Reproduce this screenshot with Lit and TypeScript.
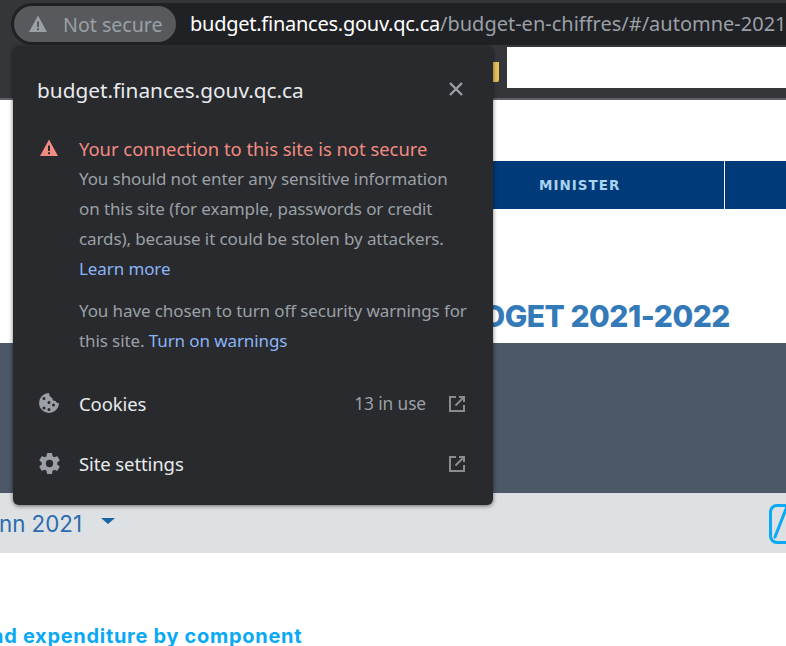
import { LitElement, html, css } from 'lit'
import { customElement } from 'lit/decorators.js'

const warn = html`<svg viewBox="0 0 20 20" width="20" height="20"><path fill="currentColor" fill-rule="evenodd" d="M10 1.500 19 18H1Z M9 7.500v5.500h2V7.500Z M9 14.200v2h2v-2Z"/></svg>`
const external = html`<svg viewBox="0 0 16 16" width="16" height="16" fill="none" stroke="#8b8c90" stroke-width="2"><path d="M7 1H1v14h14V9"/><path d="M10 1h5v5"/><path d="M14.500 1.500 6.500 9.500"/></svg>`

@customElement('app-root')
export class AppRoot extends LitElement {
  static styles = css`
    :host {
      display: block;
      position: relative;
      width: 786px;
      height: 646px;
      overflow: hidden;
      background: #fff;
      font-family: "Noto Sans", "Open Sans", sans-serif;
    }
    .toolbar {
      height: 45px;
      box-sizing: border-box;
      padding: 3px 0 0 11px;
      background: #35363a;
    }
    .omnibox {
      height: 42px;
      box-sizing: border-box;
      padding: 3px 0 0 3px;
      background: #202124;
      border-radius: 21px 0 0 21px;
      display: flex;
      white-space: nowrap;
    }
    .chip {
      width: 162px;
      height: 36px;
      box-sizing: border-box;
      border-radius: 18px;
      background: #58595c;
      color: #9aa0a6;
      display: flex;
      align-items: center;
      gap: 15px;
      padding-left: 14px;
      font-size: 19.6px;
      flex: none;
    }
    .chip svg { flex: none; }
    .url {
      margin-left: 14px;
      font-size: 20px;
      line-height: 36px;
      color: #9aa0a6;
    }
    .url b { font-weight: 400; color: #fff; letter-spacing: -0.25px; }
    .bookmarks {
      height: 53px;
      background: #35363a;
      border-bottom: 2px solid #5f6064;
      display: flex;
      justify-content: flex-end;
    }
    .bookmarks .folder {
      width: 9px;
      height: 20px;
      margin: 17px 8px 0 0;
      border-radius: 0 0 2px 2px;
      background: #e9c45c;
    }
    .bookmarks .blank {
      width: 279px;
      height: 41px;
      margin-top: 2px;
      background: #fff;
    }
    .gap { height: 61px; }
    .nav {
      height: 48px;
      margin-left: 40px;
      background: #003a78;
      display: flex;
      font: 700 13.5px "DejaVu Sans", sans-serif;
      color: #a9d3ee;
    }
    .nav .cell {
      width: 685px;
      flex: none;
      box-sizing: border-box;
      border-right: 1px solid #fff;
      padding-left: 499px;
      display: flex;
      align-items: center;
      letter-spacing: 1px;
    }
    .title {
      height: 134px;
      box-sizing: border-box;
      display: flex;
      justify-content: flex-end;
      align-items: flex-end;
      padding: 0 56px 9px 0;
      font: 800 30px "Inter", sans-serif;
      letter-spacing: -0.5px;
      color: #347ab8;
    }
    .slate { height: 150px; background: #4c5768; }
    .select {
      height: 60px;
      background: #dee1e4;
      display: flex;
      align-items: center;
      justify-content: space-between;
      font: 400 22.3px "Inter", sans-serif;
      color: #2a6cad;
    }
    .select .period { display: flex; align-items: center; gap: 19px; margin: 0 0 0 -1px; }
    .caret {
      width: 0;
      height: 0;
      border: 7px solid transparent;
      border-top: 6px solid #1266a8;
      border-bottom: 0;
      margin-top: -4px;
    }
    .select .mark {
      width: 40px;
      height: 40px;
      box-sizing: border-box;
      border: 3px solid #0aa9f5;
      border-radius: 8px;
      margin-right: -23px;
      margin-top: 2px;
    }
    .select .mark svg { display: block; }
    .heading {
      margin: 71px 0 0 -9px;
      font: 700 20px "Inter", sans-serif;
      letter-spacing: 0.7px;
      color: #0aa9f5;
      white-space: nowrap;
      line-height: 24px;
    }
    .popup {
      position: absolute;
      left: 13px;
      top: 46px;
      width: 480px;
      height: 459px;
      box-sizing: border-box;
      border-radius: 6px;
      background: #292a2d;
      box-shadow: 0 1px 4px rgba(0,0,0,.55);
      padding: 26px 24px 0;
      color: #e8eaed;
    }
    .head {
      display: flex;
      justify-content: space-between;
      align-items: center;
      font-size: 20.800px;
      line-height: 36px;
    }
    .head svg { margin: -3px 5px 0 0; }
    .warning { display: flex; gap: 20px; margin-top: 26px; }
    .warning .icon { color: #f28b82; flex: none; height: 20px; margin: 4px 0 0 2px; }
    .warning h2 {
      margin: 0;
      font-size: 18.400px;
      font-weight: 400;
      line-height: 30px;
      color: #f28b82;
    }
    .warning p {
      margin: 0;
      font-size: 17px;
      line-height: 30px;
      letter-spacing: -0.1px;
      color: #9aa0a6;
    }
    .warning p + p { margin-top: 12px; }
    a { color: #8ab4f8; text-decoration: none; }
    .rows { margin-top: 17px; }
    .row {
      display: flex;
      align-items: center;
      height: 60px;
      font-size: 18.500px;
      letter-spacing: -0.1px;
    }
    .row .lead { width: 42px; flex: none; display: flex; }
    .row .lead .cookie { margin-left: 2px; }
    .row .label { flex: 1; }
    .row .count { color: #9aa0a6; font-size: 17.300px; margin-right: 23px; }
    .row .ext { margin: 1px 4px 0 0; display: flex; }
  `

  render() {
    return html`
      <div class="toolbar">
        <div class="omnibox">
          <div class="chip">${warn}<span>Not secure</span></div>
          <div class="url"><b>budget.finances.gouv.qc.ca</b>/budget-en-chiffres/#/automne-2021</div>
        </div>
      </div>
      <div class="bookmarks"><div class="folder"></div><div class="blank"></div></div>
      <div class="gap"></div>
      <div class="nav"><div class="cell">MINISTER</div></div>
      <div class="title">BUDGET 2021-2022</div>
      <div class="slate"></div>
      <div class="select">
        <div class="period"><span>nn 2021</span><i class="caret"></i></div>
        <div class="mark">
          <svg viewBox="0 0 34 34" width="34" height="34"><path d="M15.500 -2 3 30" stroke="#0aa9f5" stroke-width="3" stroke-linecap="round" fill="none"/></svg>
        </div>
      </div>
      <div class="heading">nd expenditure by component</div>

      <div class="popup">
        <div class="head">
          <span>budget.finances.gouv.qc.ca</span>
          <svg viewBox="0 0 16 16" width="16" height="16" stroke="#9aa0a6" stroke-width="2.400"><path d="M2 2 14 14M14 2 2 14"/></svg>
        </div>
        <div class="warning">
          <div class="icon">${warn}</div>
          <div>
            <h2>Your connection to this site is not secure</h2>
            <p>You should not enter any sensitive information on this site (for example, passwords or credit cards), because it could be stolen by attackers. <a>Learn more</a></p>
            <p>You have chosen to turn off security warnings for this site. <a>Turn on warnings</a></p>
          </div>
        </div>
        <div class="rows">
          <div class="row">
            <span class="lead">
              <svg class="cookie" viewBox="0 0 20 20" width="20" height="20"><path fill-rule="evenodd" fill="#9aa0a6" d="M10 0a10 10 0 1 0 10 10c-1.600.3-3-.5-3.400-2-1.700.3-3.300-1-3.300-3C11.600 4.800 10 2.500 10 0ZM5 4.100a1.500 1.500 0 1 1 0 3 1.500 1.500 0 0 1 0-3ZM10 8a1.500 1.500 0 1 1 0 3 1.500 1.500 0 0 1 0-3ZM14.500 10.500a1.500 1.500 0 1 1 0 3 1.500 1.500 0 0 1 0-3ZM5 13.500a1.500 1.500 0 1 1 0 3 1.500 1.500 0 0 1 0-3ZM10 15a1.500 1.500 0 1 1 0 3 1.500 1.500 0 0 1 0-3Z"/></svg>
            </span>
            <span class="label">Cookies</span>
            <span class="count">13 in use</span>
            <span class="ext">${external}</span>
          </div>
          <div class="row">
            <span class="lead">
              <svg viewBox="0 0 24 24" width="25" height="25"><path fill="#9aa0a6" d="M19.430 12.980c.04-.32.07-.64.07-.98s-.03-.66-.07-.98l2.110-1.650c.19-.15.24-.42.120-.64l-2-3.460c-.12-.22-.39-.3-.61-.22l-2.490 1c-.52-.4-1.080-.73-1.690-.98l-.38-2.650A.488.488 0 0 0 14 2h-4c-.25 0-.46.18-.49.42l-.38 2.650c-.61.25-1.170.59-1.690.98l-2.490-1c-.23-.09-.49 0-.61.22l-2 3.460c-.13.22-.07.49.12.64l2.110 1.650c-.04.32-.07.65-.07.98s.03.66.07.98l-2.110 1.650c-.19.15-.24.42-.12.64l2 3.460c.12.22.39.3.61.22l2.490-1c.52.4 1.080.73 1.690.98l.38 2.650c.03.24.24.42.49.42h4c.25 0 .46-.18.49-.42l.38-2.650c.61-.25 1.170-.59 1.690-.98l2.490 1c.23.09.49 0 .61-.22l2-3.460c.12-.22.07-.49-.12-.64l-2.110-1.650ZM12 15.500a3.500 3.500 0 1 1 0-7 3.500 3.500 0 0 1 0 7Z"/></svg>
            </span>
            <span class="label">Site settings</span>
            <span class="ext">${external}</span>
          </div>
        </div>
      </div>
    `
  }
}
